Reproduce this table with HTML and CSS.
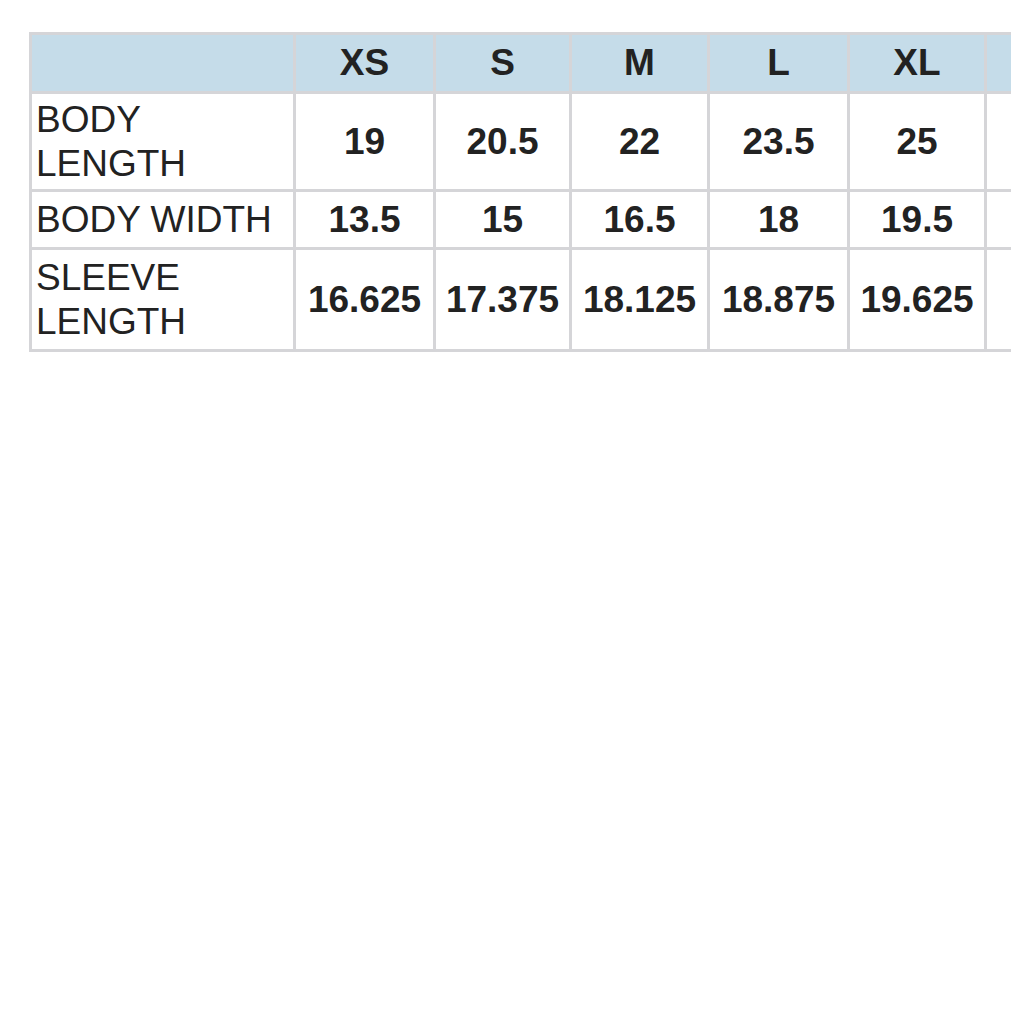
FILE: index.html
```html
<!DOCTYPE html>
<html>
<head>
<meta charset="utf-8">
<link rel="stylesheet" href="styles.css">
</head>
<body>
<div class="frame">
  <table class="size-chart">
    <colgroup>
      <col class="c-label">
      <col class="c-xs">
      <col class="c-s">
      <col class="c-m">
      <col class="c-l">
      <col class="c-xl">
      <col class="c-xxl">
    </colgroup>
    <thead>
      <tr class="head-row">
        <th></th>
        <th>XS</th>
        <th>S</th>
        <th>M</th>
        <th>L</th>
        <th>XL</th>
        <th></th>
      </tr>
    </thead>
    <tbody>
      <tr class="row-tall">
        <td class="label">BODY LENGTH</td>
        <td>19</td>
        <td>20.5</td>
        <td>22</td>
        <td>23.5</td>
        <td>25</td>
        <td></td>
      </tr>
      <tr class="row-short">
        <td class="label">BODY WIDTH</td>
        <td>13.5</td>
        <td>15</td>
        <td>16.5</td>
        <td>18</td>
        <td>19.5</td>
        <td></td>
      </tr>
      <tr class="row-last">
        <td class="label">SLEEVE LENGTH</td>
        <td>16.625</td>
        <td>17.375</td>
        <td>18.125</td>
        <td>18.875</td>
        <td>19.625</td>
        <td></td>
      </tr>
    </tbody>
  </table>
</div>
</body>
</html>
```

FILE: styles.css
```css
html, body {
  margin: 0;
  padding: 0;
  background: #ffffff;
}

.frame {
  margin-top: 32px;
  margin-left: 29px;
  width: 982px;
  overflow: hidden;
}

.size-chart {
  border-collapse: collapse;
  table-layout: fixed;
  width: 1100px;
  font-family: "Liberation Sans", Arial, sans-serif;
  font-size: 37px;
  color: #222222;
}

.c-label { width: 264px; }
.c-xs { width: 140px; }
.c-s { width: 136px; }
.c-m { width: 138px; }
.c-l { width: 140px; }
.c-xl { width: 137px; }
.c-xxl { width: 145px; }

.size-chart th,
.size-chart td {
  border: 3px solid #d5d5d8;
  padding: 0;
  text-align: center;
  vertical-align: middle;
  line-height: 44px;
  font-weight: bold;
  white-space: nowrap;
}

.head-row th {
  background: #c5dce9;
  height: 56px;
}

.row-tall td { height: 95px; }
.row-short td { height: 55px; }
.row-last td { height: 99px; }

.size-chart td.label {
  text-align: left;
  font-weight: normal;
  padding-left: 4px;
  white-space: normal;
}
```
